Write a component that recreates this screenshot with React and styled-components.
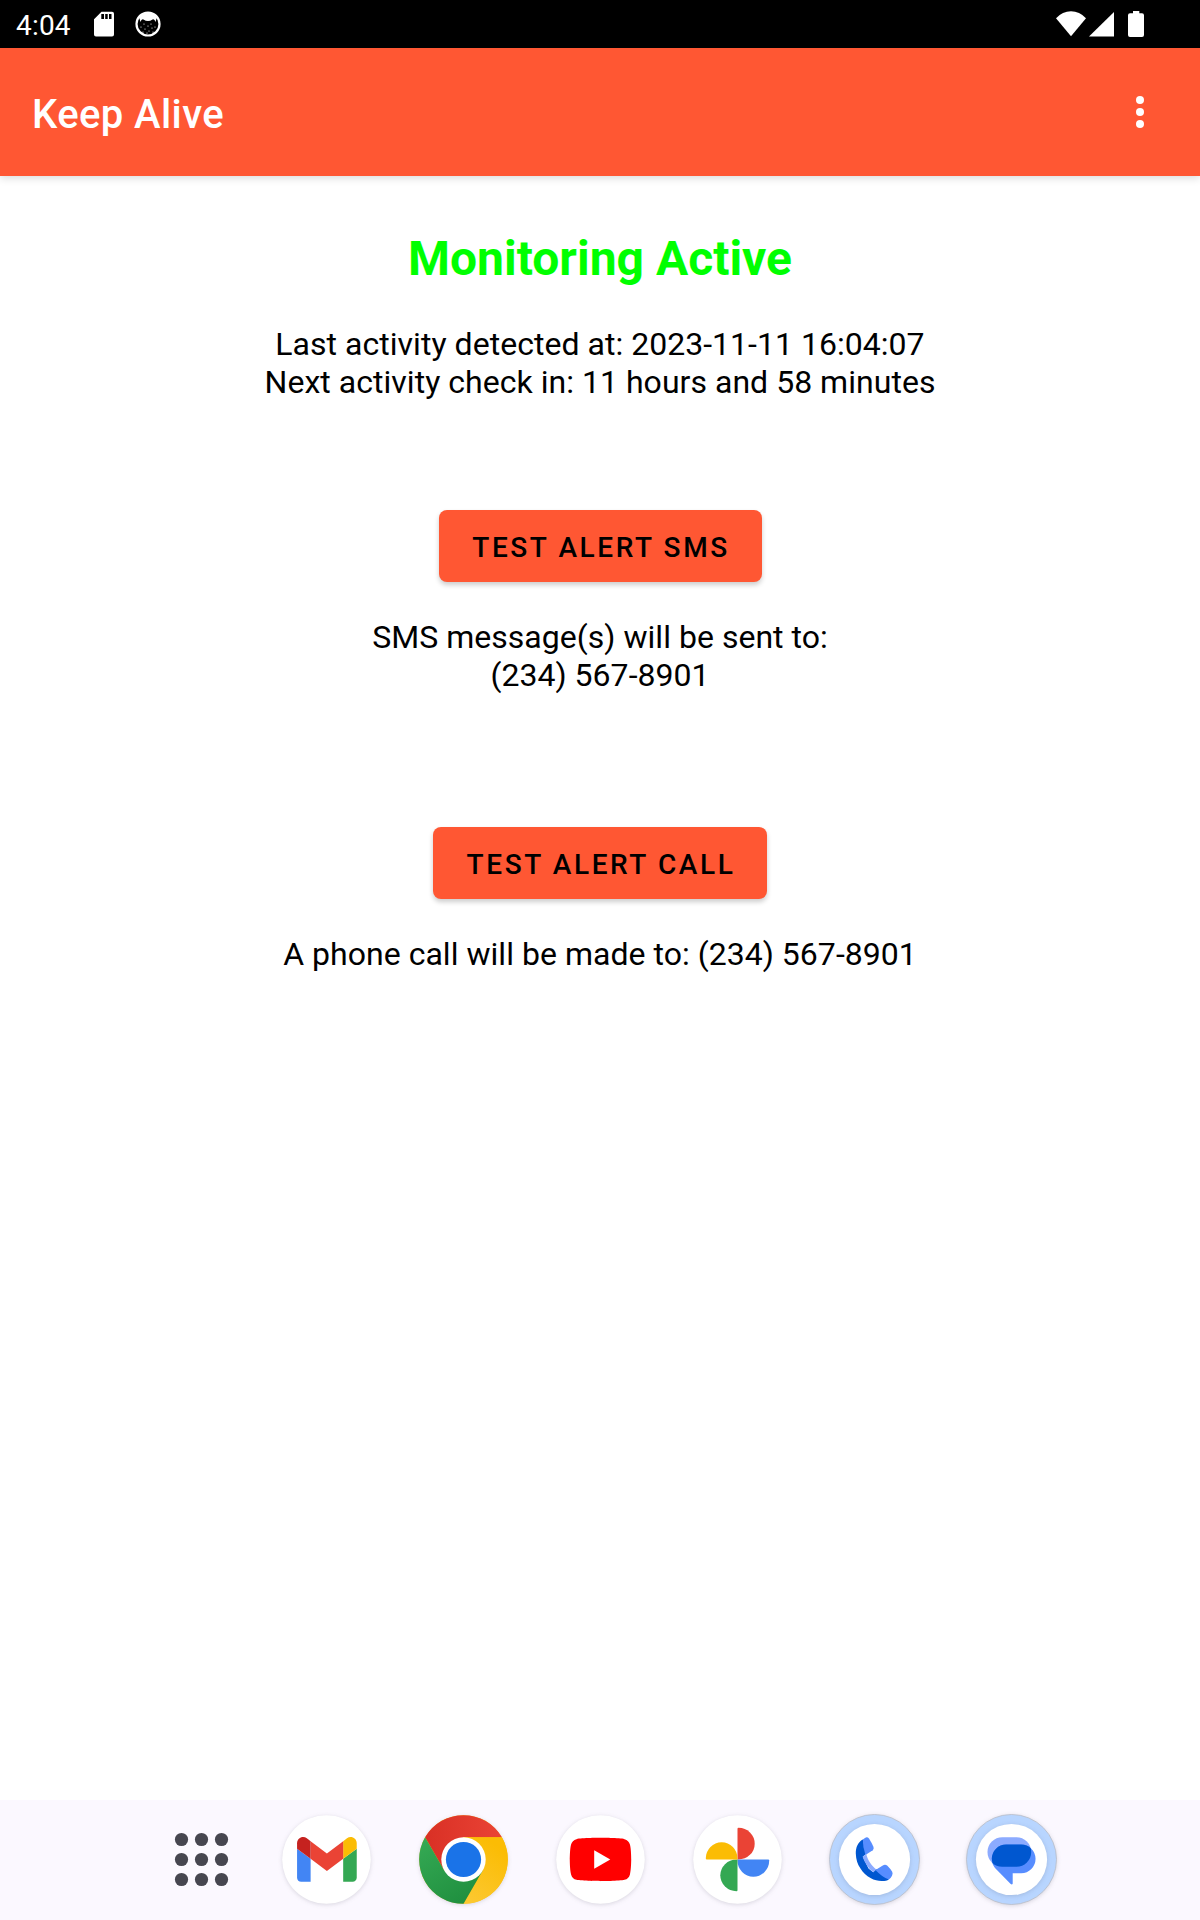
import React from "react";
import styled, { createGlobalStyle } from "styled-components";

const Global = createGlobalStyle`
  body { margin: 0; background: #fff; }
  * { box-sizing: border-box; }
`;

const Screen = styled.div`
  display: flex;
  flex-direction: column;
  width: 1200px;
  height: 1920px;
  overflow: hidden;
  background: #fff;
  color: #000;
  font-family: Roboto, "Liberation Sans", sans-serif;
`;

const StatusBar = styled.header`
  display: flex;
  align-items: center;
  justify-content: space-between;
  height: 48px;
  padding: 0 52px 0 16px;
  background: #000;
  color: #fff;
`;

const StatusGroup = styled.div`
  display: flex;
  align-items: center;
`;

const Clock = styled.span`
  width: 78px;
  padding-top: 4px;
  font-size: 28px;
  line-height: 32px;
  letter-spacing: 0.2px;
`;

const AppBar = styled.div`
  display: flex;
  align-items: center;
  justify-content: space-between;
  height: 128px;
  padding: 0 52px 0 32px;
  background: #ff5733;
  color: #fff;
  box-shadow: 0 2px 8px rgba(0, 0, 0, 0.15);
`;

const AppTitle = styled.h1`
  margin: 0;
  padding-top: 6px;
  font-size: 40px;
  font-weight: 500;
  line-height: 48px;
  letter-spacing: 0.4px;
`;

const MenuButton = styled.button`
  display: flex;
  padding: 0;
  border: 0;
  background: none;
`;

const Content = styled.main`
  flex: 1;
  display: flex;
  flex-direction: column;
  align-items: center;
  padding-top: 55px;
`;

const Heading = styled.h2`
  margin: 0;
  color: #00ff00;
  font-size: 48px;
  font-weight: 700;
  line-height: 56px;
`;

const Message = styled.p`
  margin: ${(p) => p.$top}px 0 0;
  font-size: 32px;
  line-height: 38px;
  text-align: center;
  letter-spacing: 0.03px;
  white-space: pre-line;
`;

const AlertButton = styled.button`
  width: ${(p) => p.$width}px;
  height: 72px;
  margin-top: ${(p) => p.$top}px;
  padding: 4px 0 0 2px;
  border: 0;
  border-radius: 8px;
  background: #ff5733;
  color: #000;
  font: 500 28px/32px Roboto, "Liberation Sans", sans-serif;
  letter-spacing: 2.6px;
  white-space: nowrap;
  box-shadow: 0 3px 5px rgba(0, 0, 0, 0.2);
`;

const Dock = styled.nav`
  display: flex;
  gap: 41px;
  height: 120px;
  padding: 11px 0 0 153px;
  background: #fbf8ff;
`;

const Glyph = styled.svg`
  display: block;
  flex: none;
  margin-left: ${(p) => p.$left || 0}px;
`;

const AppIcon = styled.svg`
  display: block;
  flex: none;
  width: 96px;
  height: 96px;
  margin-right: ${(p) => p.$pull || 0}px;
  overflow: visible;
`;

const Disc = styled.circle`
  filter: drop-shadow(0 1px 2px rgba(60, 60, 80, 0.18));
`;

const Icon = ({ label, pull, children }) => (
  <AppIcon viewBox="-48.5 -48.5 96 96" role="img" aria-label={label} $pull={pull}>
    {children}
  </AppIcon>
);

const SdCard = () => (
  <Glyph width="20" height="26" viewBox="0 0 20 26">
    <path
      fill="#fff"
      fillRule="evenodd"
      d="M7.500 0.700H18a2 2 0 0 1 2 2V23.500a2 2 0 0 1-2 2H2a2 2 0 0 1-2-2V8.200zM7.300 3v5h2.700V3zM11.200 3v5h2.500V3zM15 3v5h2.500V3z"
    />
  </Glyph>
);

const CatBadge = () => (
  <Glyph $left={21} width="26" height="26" viewBox="-13 -13 26 26">
    <circle r="11.500" fill="#000" stroke="#fff" strokeWidth="2.200" />
    <path fill="#fff" d="M-9-7Q-5-12 0-12T9-7L7.500-2Q6.500-5.500 4.500-4.500Q0-1.500-4.500-4.500Q-6.500-5.500-7.500-2z" />
    <g fill="#fff">
      {[[-7, 3], [-4, 0], [-3, 5], [0, 2], [3, 0], [4, 4], [7, 3], [1, 7], [-5, 8], [5, 8], [-1, 9]].map(([x, y]) => (
        <circle key={`${x},${y}`} cx={x} cy={y} r="0.600" />
      ))}
    </g>
  </Glyph>
);

const Dots = [-20, 0, 20];

export default function App() {
  return (
    <>
      <Global />
      <Screen>
        <StatusBar>
          <StatusGroup>
            <Clock>4:04</Clock>
            <SdCard />
            <CatBadge />
          </StatusGroup>
          <StatusGroup>
            <Glyph width="92" height="26" viewBox="1056 11 92 26" fill="#fff">
              <path d="M1056 18.300Q1062.500 11.300 1071 11.300T1086 18.300L1071 36.300z" />
              <path d="M1114 12V36.600H1089z" />
              <path d="M1133 11h6.300v2.300h2.700a2 2 0 0 1 2 2V35a2 2 0 0 1-2 2h-12a2 2 0 0 1-2-2V15.300a2 2 0 0 1 2-2h3z" />
            </Glyph>
          </StatusGroup>
        </StatusBar>
        <AppBar>
          <AppTitle>Keep Alive</AppTitle>
          <MenuButton aria-label="More options">
            <Glyph width="16" height="32" viewBox="0 0 16 32" fill="#fff">
              <circle cx="8" cy="4" r="4" />
              <circle cx="8" cy="16" r="4" />
              <circle cx="8" cy="28" r="4" />
            </Glyph>
          </MenuButton>
        </AppBar>
        <Content>
          <Heading>Monitoring Active</Heading>
          <Message $top={38}>{"Last activity detected at: 2023-11-11 16:04:07\nNext activity check in: 11 hours and 58 minutes"}</Message>
          <AlertButton $width={323} $top={109}>TEST ALERT SMS</AlertButton>
          <Message $top={36}>{"SMS message(s) will be sent to:\n(234) 567-8901"}</Message>
          <AlertButton $width={334} $top={133}>TEST ALERT CALL</AlertButton>
          <Message $top={36}>A phone call will be made to: (234) 567-8901</Message>
        </Content>
        <Dock>
          <Icon label="All apps" pull={-12}>
            {Dots.map((y) => Dots.map((x) => <circle key={`${x},${y}`} cx={x} cy={y} r="6.600" fill="#464650" />))}
          </Icon>
          <Icon label="Gmail">
            <Disc r="44.300" fill="#fff" />
            <g transform="translate(0.4 0) scale(0.678) translate(-96 -75)">
              <path fill="#4285f4" d="M58 108h14V74L52 59v43c0 3.320 2.690 6 6 6" />
              <path fill="#34a853" d="M120 108h14c3.320 0 6-2.690 6-6V59l-20 15" />
              <path fill="#fbbc04" d="M120 48v26l20-15v-8c0-7.420-8.470-11.650-14.400-7.200" />
              <path fill="#ea4335" d="M72 74V48l24 18 24-18v26L96 92" />
              <path fill="#c5221f" d="M52 51v8l20 15V48l-5.600-4.200c-5.940-4.450-14.400-.220-14.400 7.200" />
            </g>
          </Icon>
          <Icon label="Chrome">
            <defs>
              <linearGradient id="cr"><stop stopColor="#d93025" /><stop offset="1" stopColor="#ea4335" /></linearGradient>
              <linearGradient id="cy" x1="0" y1="1" x2="0.500" y2="0"><stop stopColor="#fcc934" /><stop offset="1" stopColor="#fbbc04" /></linearGradient>
              <linearGradient id="cg" x1="0.800" y1="1" x2="0.200" y2="0"><stop stopColor="#1e8e3e" /><stop offset="1" stopColor="#34a853" /></linearGradient>
            </defs>
            <Disc r="44.300" fill="#fbbc04" />
            <path fill="url(#cr)" d="M-38.400-22.150A44.300 44.300 0 0 1 38.400-22.150H0L-19.200 11.080z" />
            <path fill="url(#cy)" d="M38.400-22.150A44.300 44.300 0 0 1 0 44.300L19.200 11.080L0-22.150z" />
            <path fill="url(#cg)" d="M0 44.300A44.300 44.300 0 0 1-38.400-22.150L-19.200 11.080L0 15L19.200 11.080z" />
            <circle r="22.200" fill="#fff" />
            <circle r="17.600" fill="#1a73e8" />
          </Icon>
          <Icon label="YouTube">
            <Disc r="44.300" fill="#fff" />
            <g transform="scale(2.56) translate(-12 -12)">
              <path fill="#f00" d="M23.498 6.186a3.016 3.016 0 0 0-2.122-2.136C19.505 3.545 12 3.545 12 3.545s-7.505 0-9.377.505A3.017 3.017 0 0 0 .502 6.186C0 8.070 0 12 0 12s0 3.930.502 5.814a3.016 3.016 0 0 0 2.122 2.136c1.871.505 9.376.505 9.376.505s7.505 0 9.377-.505a3.015 3.015 0 0 0 2.122-2.136C24 15.930 24 12 24 12s0-3.930-.502-5.814z" />
              <path fill="#fff" d="M9.545 15.568V8.432L15.818 12z" />
            </g>
          </Icon>
          <Icon label="Photos">
            <Disc r="44.300" fill="#fff" />
            {["#ea4335", "#4285f4", "#34a853", "#fbbc04"].map((color, i) => (
              <path key={color} fill={color} transform={`rotate(${i * 90})`} d="M0 0V-30.700Q0-31.700 1-31.700A16.200 15.850 0 0 1 1 0z" />
            ))}
          </Icon>
          <Icon label="Phone">
            <Disc r="45" fill="#b8d5ff" stroke="#b9bcc6" strokeWidth="0.800" />
            <Disc r="35.600" fill="#fff" />
            <path fill="#0057d0" d="M-11.700-20C-16.500-17.500-18.900-12-18.700-6C-18.500 0-17 5-14 9C-11.500 13-8 16.500-4 18.500C0 20.800 4 21.600 7.700 21.500C10.500 21.500 12.800 21 14.300 20L9 10L1.300 10L-1.300 12.800L-6 9L-11.700-2.800L-8-6z" />
            <path fill="#8cabff" d="M-11.900-2.800L-8.300-5.500C-7 0-3 6.500 1.900 9.900L-1.300 12.800C-6.500 8.500-10 3-11.900-2.800z" />
            <path fill="#578dff" d="M-11.700-20L-9.500-21.600Q-7.200-23-5.500-20.900Q-3-17-1-12.500Q-0.300-10.500-1.800-9.200L-9-4.500Q-11.800-12-11.700-20z" />
            <path fill="#578dff" d="M1 10.400L8.300 5.900Q10.800 4.600 12.900 6.200Q15.800 9 17.700 12.300Q18.600 14 17.500 16.200Q16.500 18.500 14.300 20Q7 17 1 10.400z" />
          </Icon>
          <Icon label="Messages">
            <defs>
              <clipPath id="bubble"><rect x="-24" y="-22.300" width="43.700" height="29.600" rx="14.800" /></clipPath>
            </defs>
            <Disc r="45" fill="#b8d5ff" stroke="#b9bcc6" strokeWidth="0.800" />
            <Disc r="35.600" fill="#fff" />
            <rect x="-24" y="-22.300" width="43.700" height="29.600" rx="14.800" fill="#8cabff" />
            <path fill="#578dff" d="M-5.400-15H9.700A14.300 14.300 0 0 1 9.700 13.700H1.200V24.300Q0.500 25.500-0.800 24.500L-16.500 8.500Q-19.700 4.500-19.700-0.700A14.300 14.300 0 0 1-5.400-15z" />
            <path fill="#0057d0" clipPath="url(#bubble)" d="M-5.400-15H9.700A14.300 14.300 0 0 1 9.700 13.700H-10L-16.500 8.500Q-19.700 4.500-19.700-0.700A14.300 14.300 0 0 1-5.400-15z" />
          </Icon>
        </Dock>
      </Screen>
    </>
  );
}
